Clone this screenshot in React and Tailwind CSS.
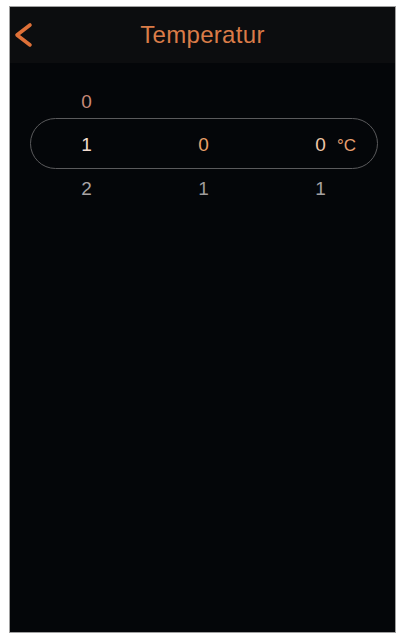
export default function App() {
  const font = { fontFamily: '"Liberation Sans", Arial, sans-serif' };
  const row = "grid grid-cols-[117px_117px_117px] pl-[18px] text-[19px] leading-[19px] items-center text-center";
  return (
    <div className="w-[401px] h-[637px] bg-white pt-[6px] pl-[9px] pr-[5px] pb-[4px]" style={font}>
      <div className="h-[627px] bg-[#040609] border border-[#a0a0a0] flex flex-col">
        <div className="h-[56px] bg-[#0c0d0f] relative flex items-center justify-center">
          <svg className="absolute left-[3px] top-[15px]" width="24" height="26" viewBox="0 0 24 26">
            <path d="M17 3 L4 13 L17 23" fill="none" stroke="#de7038" strokeWidth="3.6" strokeLinecap="round" strokeLinejoin="round" />
          </svg>
          <span className="text-[24px] tracking-[0.3px] text-[#da7c48] mt-[-1px]">Temperatur</span>
        </div>
        <div className="relative mt-[18px]">
          <div className="absolute left-[20px] right-[17px] top-[37px] h-[51px] rounded-full border border-[#5a5a5c]" />
          <div className={row + " h-[40px]"}>
            <span className="text-[#c98a78]">0</span>
            <span />
            <span />
          </div>
          <div className={row + " h-[46px]"}>
            <span className="text-[#f2dcd0]">1</span>
            <span className="text-[#eaa06a]">0</span>
            <span className="text-[#f0c6a8] relative">
              0
              <span className="absolute left-[75px] top-[1px] text-[17px] text-[#e8a070]">°C</span>
            </span>
          </div>
          <div className={row + " h-[42px]"}>
            <span className="text-[#a8a4a4]">2</span>
            <span className="text-[#9e9c9c]">1</span>
            <span className="text-[#a4a2a2]">1</span>
          </div>
        </div>
      </div>
    </div>
  );
}
